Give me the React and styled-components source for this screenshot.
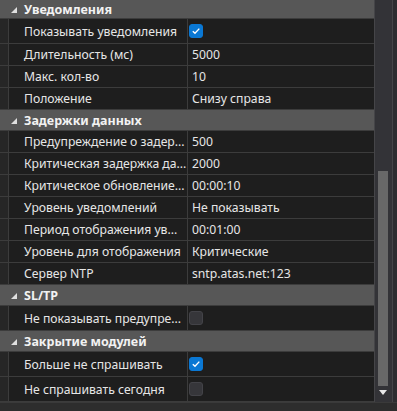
import React from "react";
import styled, { createGlobalStyle } from "styled-components";

const Global = createGlobalStyle`
  html, body { margin: 0; padding: 0; background: #2b2b2b; }
  body { font-family: "Noto Sans", "Open Sans", sans-serif; font-size: 12.2px; color: #e6e6e6; }
`;

const Frame = styled.div`
  width: 397px;
  height: 411px;
  display: flex;
  flex-direction: column;
  background: #2b2b2b;
  overflow: hidden;
`;

const Main = styled.div`
  display: flex;
  height: 402px;
`;

const Grid = styled.div`
  flex: 1;
  overflow: hidden;
  display: flex;
  flex-direction: column;
`;

const Header = styled.div`
  flex: none;
  height: ${(p) => p.$h || 20}px;
  border-bottom: 1px solid #3c3c3c;
  background: #575757;
  display: flex;
  align-items: center;
  font-weight: 700;
  color: #f2f2f2;
  font-size: 12.5px;
`;

const Toggle = styled.svg`
  width: 6px;
  height: 6px;
  margin: 1px 7px 0 11px;
  flex: none;
`;

const Row = styled.div`
  flex: none;
  height: ${(p) => (p.$check ? 24 : 21)}px;
  display: grid;
  grid-template-columns: 9px 179px 1fr;
  border-bottom: 1px solid #3c3c3c;
  background: #1e1e1e;
`;

const Indent = styled.div`
  background: #262626;
  border-right: 1px solid #3c3c3c;
`;

const Name = styled.div`
  padding-left: 15px;
  display: flex;
  align-items: center;
  border-right: 1px solid #3c3c3c;
  white-space: nowrap;
  overflow: hidden;
`;

const Value = styled.div`
  padding-left: 4px;
  display: flex;
  align-items: center;
  white-space: nowrap;
  overflow: hidden;
`;

const Box = styled.div`
  width: 14px;
  height: 14px;
  margin-left: -3px;
  border-radius: 3px;
  box-sizing: border-box;
  background: ${(p) => (p.$on ? "#0a78d4" : "#36363a")};
  border: 1px solid ${(p) => (p.$on ? "#0a78d4" : "#434348")};
  display: flex;
  align-items: center;
  justify-content: center;
`;

const Scroll = styled.div`
  width: 17px;
  flex: none;
  background: #333337;
  border-left: 1px solid #454548;
  border-right: 1px solid #454548;
  position: relative;
`;

const Thumb = styled.div`
  position: absolute;
  left: 3px;
  width: 10px;
  top: 171px;
  height: 215px;
  background: #686868;
`;

const Arrow = styled.svg`
  position: absolute;
  left: 4px;
  top: 390px;
  width: 8px;
  height: 5px;
`;

const RightStrip = styled.div`
  width: 4px;
  flex: none;
  background: #2d2d30;
`;

const Bottom = styled.div`
  height: 9px;
  background: #2d2d2d;
  border-top: 1px solid #3a3a3a;
`;

const Check = () => (
  <svg width="10" height="10" viewBox="0 0 10 10">
    <path d="M1.8 5.2 L4 7.3 L8.3 2.6" fill="none" stroke="#fff" strokeWidth="1.4" />
  </svg>
);

const sections = [
  {
    title: "Уведомления",
    h: 18,
    rows: [
      ["Показывать уведомления", true],
      ["Длительность (мс)", "5000"],
      ["Макс. кол-во", "10"],
      ["Положение", "Снизу справа"],
    ],
  },
  {
    title: "Задержки данных",
    rows: [
      ["Предупреждение о задер...", "500"],
      ["Критическая задержка да...", "2000"],
      ["Критическое обновление...", "00:00:10"],
      ["Уровень уведомлений", "Не показывать"],
      ["Период отображения ув...", "00:01:00"],
      ["Уровень для отображения", "Критические"],
      ["Сервер NTP", "sntp.atas.net:123"],
    ],
  },
  {
    title: "SL/TP",
    rows: [["Не показывать предупре...", false]],
  },
  {
    title: "Закрытие модулей",
    rows: [
      ["Больше не спрашивать", true],
      ["Не спрашивать сегодня", false],
    ],
  },
];

export default function App() {
  return (
    <>
      <Global />
      <Frame>
        <Main>
          <Grid>
            {sections.map((s) => (
              <React.Fragment key={s.title}>
                <Header $h={s.h}>
                  <Toggle viewBox="0 0 6 6">
                    <path d="M6 0 L6 6 L0 6 Z" fill="#e0e0e0" />
                  </Toggle>
                  {s.title}
                </Header>
                {s.rows.map(([n, v]) => {
                  const isCheck = typeof v === "boolean";
                  return (
                    <Row key={n} $check={isCheck}>
                      <Indent />
                      <Name>{n}</Name>
                      <Value>
                        {isCheck ? <Box $on={v}>{v && <Check />}</Box> : v}
                      </Value>
                    </Row>
                  );
                })}
              </React.Fragment>
            ))}
          </Grid>
          <Scroll>
            <Thumb />
            <Arrow viewBox="0 0 8 5">
              <path d="M0 0 L8 0 L4 5 Z" fill="#e8e8e8" />
            </Arrow>
          </Scroll>
          <RightStrip />
        </Main>
        <Bottom />
      </Frame>
    </>
  );
}
